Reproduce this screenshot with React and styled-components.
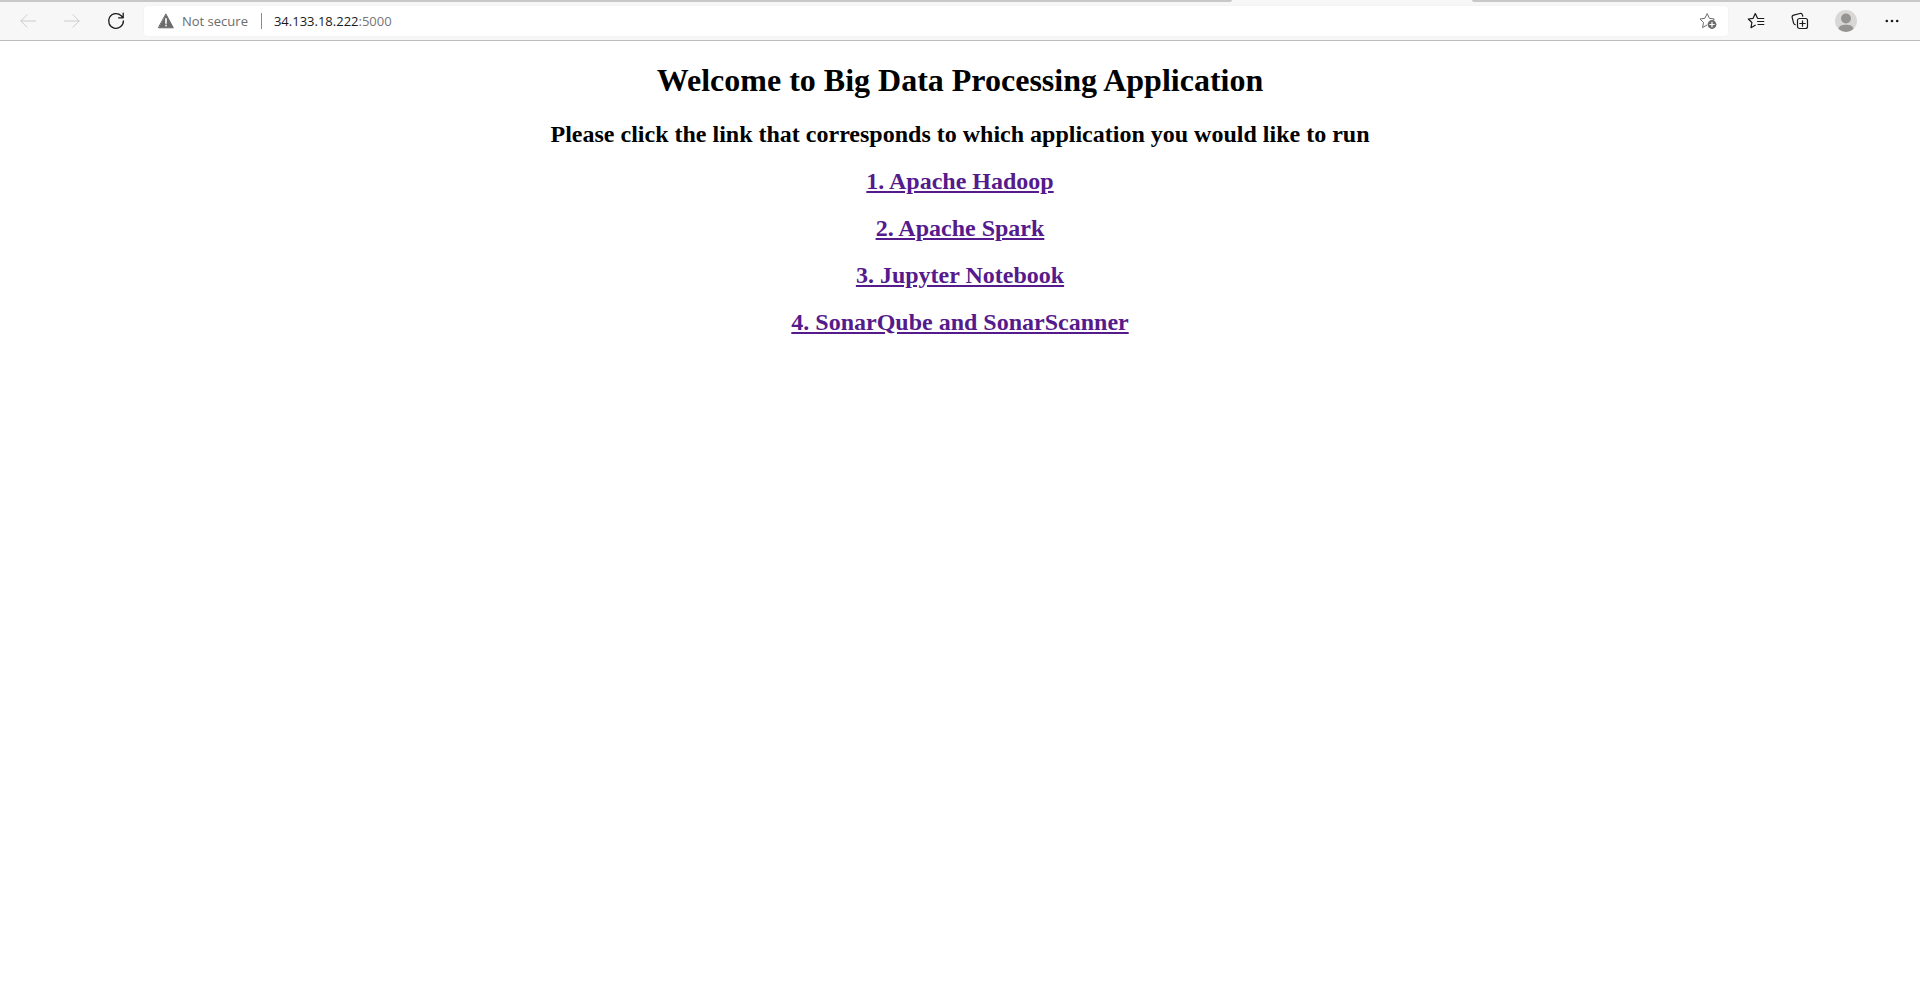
import React from "react";
import styled, { createGlobalStyle } from "styled-components";

const GlobalStyle = createGlobalStyle`
  body {
    margin: 0;
    background: #fff;
    color: #000;
    font-family: "Liberation Serif", "Times New Roman", serif;
  }
`;

const TabStrip = styled.div`
  display: flex;
  height: 2px;
  background: #f7f7f7;
`;

const InactiveTabs = styled.div`
  flex: ${(p) => p.$share} 1 0;
  background: #c8c8c8;
  border-radius: ${(p) => (p.$side === "left" ? "0 0 2px 0" : "0 0 0 2px")};
`;

const ActiveTab = styled.div`
  flex: 0 0 240px;
`;

const Toolbar = styled.header`
  display: flex;
  align-items: center;
  gap: 6px;
  height: 38px;
  padding: 0 6px;
  background: #f7f7f7;
  border-bottom: 1px solid #bdbdbd;
  font-family: "Open Sans", "Segoe UI", sans-serif;
  font-size: 13px;
`;

const Group = styled.div`
  display: flex;
`;

const IconButton = styled.button`
  display: flex;
  align-items: center;
  justify-content: center;
  width: ${(p) => p.$width || 44}px;
  height: 30px;
  padding: 0;
  border: 0;
  background: none;
  color: ${(p) => p.$color || "#1a1a1a"};
`;

const AddressBar = styled.div`
  display: flex;
  flex: 1;
  align-items: center;
  height: 30px;
  padding: 0 4px 0 14px;
  border-radius: 4px;
  background: #fff;
  box-shadow: 0 0 2px #ececec;
  box-sizing: border-box;
`;

const SecurityButton = styled.button`
  display: flex;
  align-items: center;
  gap: 8px;
  padding: 0 13px 0 0;
  border: 0;
  border-right: 1px solid #8a8a8a;
  background: none;
  color: #6b6b6b;
  font: inherit;
  line-height: 16px;
`;

const UrlField = styled.label`
  display: flex;
  flex: 1;
  align-items: center;
  padding-left: 12px;
  color: #1a1a1a;
`;

const PortInput = styled.input`
  flex: 1;
  min-width: 0;
  padding: 0;
  border: 0;
  outline: 0;
  background: none;
  color: #757575;
  font: inherit;
`;

const Page = styled.main`
  padding: 0 8px;
  text-align: center;
`;

const Title = styled.h1`
  margin: 21px 0 22px;
  font-size: 32px;
  line-height: 37px;
`;

const Line = styled.h2`
  margin: 20px 0;
  font-size: 24px;
  line-height: 27px;
`;

const AppLink = styled.a`
  color: #551a8b;
  text-decoration: underline;
`;

const Svg = ({ size = 16, children }) => (
  <svg
    width={size}
    height={size}
    viewBox={`0 0 ${size} ${size}`}
    fill="none"
    stroke="currentColor"
    strokeLinecap="round"
    strokeLinejoin="round"
    aria-hidden="true"
  >
    {children}
  </svg>
);

const BackIcon = () => (
  <Svg>
    <path d="M15.5 8H.8M7 1.8.8 8 7 14.2" />
  </Svg>
);

const ForwardIcon = () => (
  <Svg>
    <path d="M.5 8h14.7M9 1.8 15.2 8 9 14.2" />
  </Svg>
);

const RefreshIcon = () => (
  <Svg size={18}>
    <path d="M16.4 9a7.4 7.4 0 1 1-2.2-5.3l1.9 1.9M16.2 1.2v4.6h-4.6" strokeWidth="1.3" />
  </Svg>
);

const WarningIcon = () => (
  <Svg>
    <path d="M8 1.2 15.3 14.8H.7Z" fill="currentColor" />
    <path d="M8 5.8v4.4M8 12.4v.3" stroke="#fff" strokeWidth="1.6" />
  </Svg>
);

const AddFavoriteIcon = () => (
  <Svg size={18}>
    <path d="M7.6 13.2 3.6 15.6l.9-5.1L1 7l4.9-.7L8.2 1.6l2.2 4.7 4.9.7-1.6 1.6" />
    <circle cx="13" cy="12.5" r="4.4" fill="currentColor" stroke="none" />
    <path d="M13 10.3v4.4M10.8 12.5h4.4" stroke="#fff" strokeWidth="1.2" />
  </Svg>
);

const FavoritesIcon = () => (
  <Svg size={18}>
    <path d="M8.2 13.2 4 15.7l.9-5.2L1.3 7l4.8-.7 2.2-4.8 2.1 4.6M11 6.5h5.8M10.5 9.5h6.3M11 12.5h5.8" strokeWidth="1.2" />
  </Svg>
);

const CollectionsIcon = () => (
  <Svg size={18}>
    <rect x="6.5" y="6.5" width="10" height="10" rx="2" strokeWidth="1.2" />
    <path d="M11.5 8.8v5.4M8.8 11.5h5.4M4.2 12.6c-.8-.1-1.4-.7-1.6-1.5L1.2 5.6c-.3-1.1.4-2.2 1.5-2.5l6.2-1.6c1.1-.3 2.2.3 2.5 1.4l.4 1.3" strokeWidth="1.2" />
  </Svg>
);

const AvatarIcon = () => (
  <Svg size={22}>
    <circle cx="11" cy="11" r="11" fill="#d9d7d5" stroke="none" />
    <circle cx="11" cy="8.5" r="5" fill="#969492" stroke="none" />
    <path d="M3.6 19.1c.4-3.2 3-4.4 7.4-4.4s7 1.2 7.4 4.4A11 11 0 0 1 3.6 19.1Z" fill="#969492" stroke="none" />
  </Svg>
);

const MoreIcon = () => (
  <Svg>
    <g fill="currentColor" stroke="none">
      <circle cx="2.8" cy="8" r="1.3" />
      <circle cx="8" cy="8" r="1.3" />
      <circle cx="13.2" cy="8" r="1.3" />
    </g>
  </Svg>
);

const apps = [
  "1. Apache Hadoop",
  "2. Apache Spark",
  "3. Jupyter Notebook",
  "4. SonarQube and SonarScanner",
];

export default function App() {
  return (
    <>
      <GlobalStyle />
      <TabStrip>
        <InactiveTabs $share={11} $side="left" />
        <ActiveTab />
        <InactiveTabs $share={4} $side="right" />
      </TabStrip>
      <Toolbar>
        <Group>
          <IconButton aria-label="Back" $color="#cccccc"><BackIcon /></IconButton>
          <IconButton aria-label="Forward" $color="#cccccc"><ForwardIcon /></IconButton>
          <IconButton aria-label="Refresh"><RefreshIcon /></IconButton>
        </Group>
        <AddressBar>
          <SecurityButton>
            <WarningIcon />
            Not secure
          </SecurityButton>
          <UrlField>
            <span>34.133.18.222</span>
            <PortInput aria-label="Address" defaultValue=":5000" />
          </UrlField>
          <IconButton aria-label="Add to favorites" $width={32} $color="#6b6b6b">
            <AddFavoriteIcon />
          </IconButton>
        </AddressBar>
        <Group>
          <IconButton aria-label="Favorites"><FavoritesIcon /></IconButton>
          <IconButton aria-label="Collections"><CollectionsIcon /></IconButton>
          <IconButton aria-label="Profile" $width={48}><AvatarIcon /></IconButton>
          <IconButton aria-label="Settings and more"><MoreIcon /></IconButton>
        </Group>
      </Toolbar>
      <Page>
        <Title>Welcome to Big Data Processing Application</Title>
        <Line>Please click the link that corresponds to which application you would like to run</Line>
        {apps.map((name) => (
          <Line key={name}>
            <AppLink href="#">{name}</AppLink>
          </Line>
        ))}
      </Page>
    </>
  );
}
